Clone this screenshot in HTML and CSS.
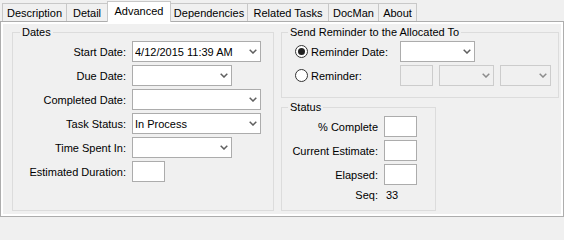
FILE: index.html
```html
<!DOCTYPE html>
<html>
<head>
<meta charset="utf-8">
<link rel="stylesheet" href="styles.css">
</head>
<body>
<div class="tabs">
  <div class="tab t-desc">Description</div>
  <div class="tab t-detail">Detail</div>
  <div class="tab active t-adv">Advanced</div>
  <div class="tab t-dep">Dependencies</div>
  <div class="tab t-rel">Related Tasks</div>
  <div class="tab t-doc">DocMan</div>
  <div class="tab t-about">About</div>
</div>
<div class="panel">
  <div class="page">
    <div class="grp dates">
      <div class="gtitle">Dates</div>
      <div class="form dates-form">
        <span class="lbl">Start Date:</span>
        <div class="combo w-wide"><span class="val">4/12/2015 11:39 AM</span><svg class="chev" width="8" height="5" viewBox="0 0 8 5"><polyline points="0.7,0.7 4,4 7.3,0.7" fill="none" stroke="currentColor" stroke-width="1.5"/></svg></div>
        <span class="lbl">Due Date:</span>
        <div class="combo w-mid"><span class="val"></span><svg class="chev" width="8" height="5" viewBox="0 0 8 5"><polyline points="0.7,0.7 4,4 7.3,0.7" fill="none" stroke="currentColor" stroke-width="1.5"/></svg></div>
        <span class="lbl">Completed Date:</span>
        <div class="combo w-wide"><span class="val"></span><svg class="chev" width="8" height="5" viewBox="0 0 8 5"><polyline points="0.7,0.7 4,4 7.3,0.7" fill="none" stroke="currentColor" stroke-width="1.5"/></svg></div>
        <span class="lbl">Task Status:</span>
        <div class="combo w-wide"><span class="val">In Process</span><svg class="chev" width="8" height="5" viewBox="0 0 8 5"><polyline points="0.7,0.7 4,4 7.3,0.7" fill="none" stroke="currentColor" stroke-width="1.5"/></svg></div>
        <span class="lbl">Time Spent In:</span>
        <div class="combo w-mid"><span class="val"></span><svg class="chev" width="8" height="5" viewBox="0 0 8 5"><polyline points="0.7,0.7 4,4 7.3,0.7" fill="none" stroke="currentColor" stroke-width="1.5"/></svg></div>
        <span class="lbl">Estimated Duration:</span>
        <div class="text w-small"></div>
      </div>
    </div>
    <div class="rightcol">
      <div class="grp reminder">
        <div class="gtitle">Send Reminder to the Allocated To</div>
        <div class="rrows">
          <div class="rrow">
            <div class="choice"><span class="radio on"></span><span>Reminder Date:</span></div>
            <div class="combo w-rem"><span class="val"></span><svg class="chev" width="8" height="5" viewBox="0 0 8 5"><polyline points="0.7,0.7 4,4 7.3,0.7" fill="none" stroke="currentColor" stroke-width="1.5"/></svg></div>
          </div>
          <div class="rrow">
            <div class="choice"><span class="radio"></span><span>Reminder:</span></div>
            <div class="text w-small dis"></div>
            <div class="combo w-c2 dis"><span class="val"></span><svg class="chev" width="8" height="5" viewBox="0 0 8 5"><polyline points="0.7,0.7 4,4 7.3,0.7" fill="none" stroke="currentColor" stroke-width="1.5"/></svg></div>
            <div class="combo w-c3 dis"><span class="val"></span><svg class="chev" width="8" height="5" viewBox="0 0 8 5"><polyline points="0.7,0.7 4,4 7.3,0.7" fill="none" stroke="currentColor" stroke-width="1.5"/></svg></div>
          </div>
        </div>
      </div>
      <div class="grp status">
        <div class="gtitle">Status</div>
        <div class="form status-form">
          <span class="lbl">% Complete</span>
          <div class="text w-small"></div>
          <span class="lbl">Current Estimate:</span>
          <div class="text w-small"></div>
          <span class="lbl">Elapsed:</span>
          <div class="text w-small"></div>
          <span class="lbl">Seq:</span>
          <span class="seqval">33</span>
        </div>
      </div>
    </div>
  </div>
</div>
</body>
</html>
```
FILE: styles.css
```css
html, body {
  margin: 0;
  padding: 0;
}
body {
  background: #f0f0f0;
  font-family: "Liberation Sans", Arial, sans-serif;
  font-size: 11px;
  color: #000;
  width: 564px;
  height: 218px;
  overflow: hidden;
}

/* tabs */
.tabs {
  display: flex;
  align-items: flex-end;
  height: 21px;
  padding-left: 2px;
  box-sizing: border-box;
}
.tab {
  box-sizing: border-box;
  height: 18px;
  border: 1px solid #c8c8c8;
  border-bottom: none;
  margin-left: -1px;
  padding-top: 3px;
  line-height: 13px;
  text-align: center;
  background: #f0f0f0;
  white-space: nowrap;
}
.tab:first-child { margin-left: 0; }
.tab.active {
  height: 21px;
  margin-bottom: -1px;
  background: #fff;
  position: relative;
  z-index: 1;
}
.t-desc { width: 65px; }
.t-detail { width: 42px; }
.t-adv { width: 64px; }
.t-dep { width: 78px; }
.t-rel { width: 82px; }
.t-doc { width: 51px; }
.t-about { width: 39px; }

/* panel */
.panel {
  box-sizing: border-box;
  width: 564px;
  height: 196px;
  border: 1px solid #adadad;
  background: #fff;
  padding: 2px;
}
.page {
  box-sizing: border-box;
  height: 190px;
  background: #f0f0f0;
  display: flex;
  align-items: flex-start;
  gap: 7px;
  padding: 8px 0 0 9px;
}

/* group boxes */
.grp {
  box-sizing: border-box;
  border: 1px solid #dcdcdc;
}
.gtitle {
  display: table;
  margin: -7px 0 0 7px;
  padding: 0 2px;
  line-height: 13px;
  background: #f0f0f0;
  white-space: nowrap;
}
.dates { width: 262px; height: 179px; flex: none; }
.rightcol {
  display: flex;
  flex-direction: column;
  gap: 9px;
  width: 278px;
  flex: none;
}
.reminder { width: 278px; height: 66px; }
.reminder .gtitle, .status .gtitle { margin-left: 6px; }
.status { width: 155px; height: 104px; }

/* forms */
.form {
  display: grid;
  column-gap: 6px;
  row-gap: 3px;
  grid-auto-rows: 21px;
  align-items: center;
  justify-items: start;
  margin-top: 2px;
}
.dates-form { grid-template-columns: 113px auto; }
.status-form {
  grid-template-columns: 96px auto;
  grid-template-rows: 21px 21px 21px 13px;
}
.lbl {
  justify-self: end;
  white-space: nowrap;
}
.seqval { padding-left: 2px; }

.combo, .text {
  box-sizing: border-box;
  height: 21px;
  border: 1px solid #acacac;
  background: #fff;
}
.combo {
  display: flex;
  align-items: center;
  padding: 0 3px 0 2px;
  color: #5f5f5f;
}
.combo .val {
  flex: 1;
  color: #000;
  white-space: nowrap;
  overflow: hidden;
}
.chev { display: block; flex: none; }
.dis {
  background: #f0f0f0;
  border-color: #cccccc;
  color: #8c8c8c;
}

.w-wide { width: 129px; }
.w-mid { width: 100px; }
.w-small { width: 33px; }
.w-rem { width: 75px; }
.w-c2 { width: 55px; }
.w-c3 { width: 51px; }

/* reminder rows */
.rrows {
  display: flex;
  flex-direction: column;
  gap: 3px;
  margin-top: 2px;
}
.rrow {
  display: flex;
  align-items: center;
  height: 21px;
  gap: 6px;
}
.choice {
  box-sizing: border-box;
  width: 112px;
  padding-left: 13px;
  display: flex;
  align-items: center;
  gap: 3px;
  white-space: nowrap;
}
.radio {
  box-sizing: border-box;
  width: 13px;
  height: 13px;
  border: 1px solid #333;
  border-radius: 50%;
  background: #fff;
  display: flex;
  align-items: center;
  justify-content: center;
  flex: none;
}
.radio.on::after {
  content: "";
  width: 7px;
  height: 7px;
  border-radius: 50%;
  background: #222;
}
```
